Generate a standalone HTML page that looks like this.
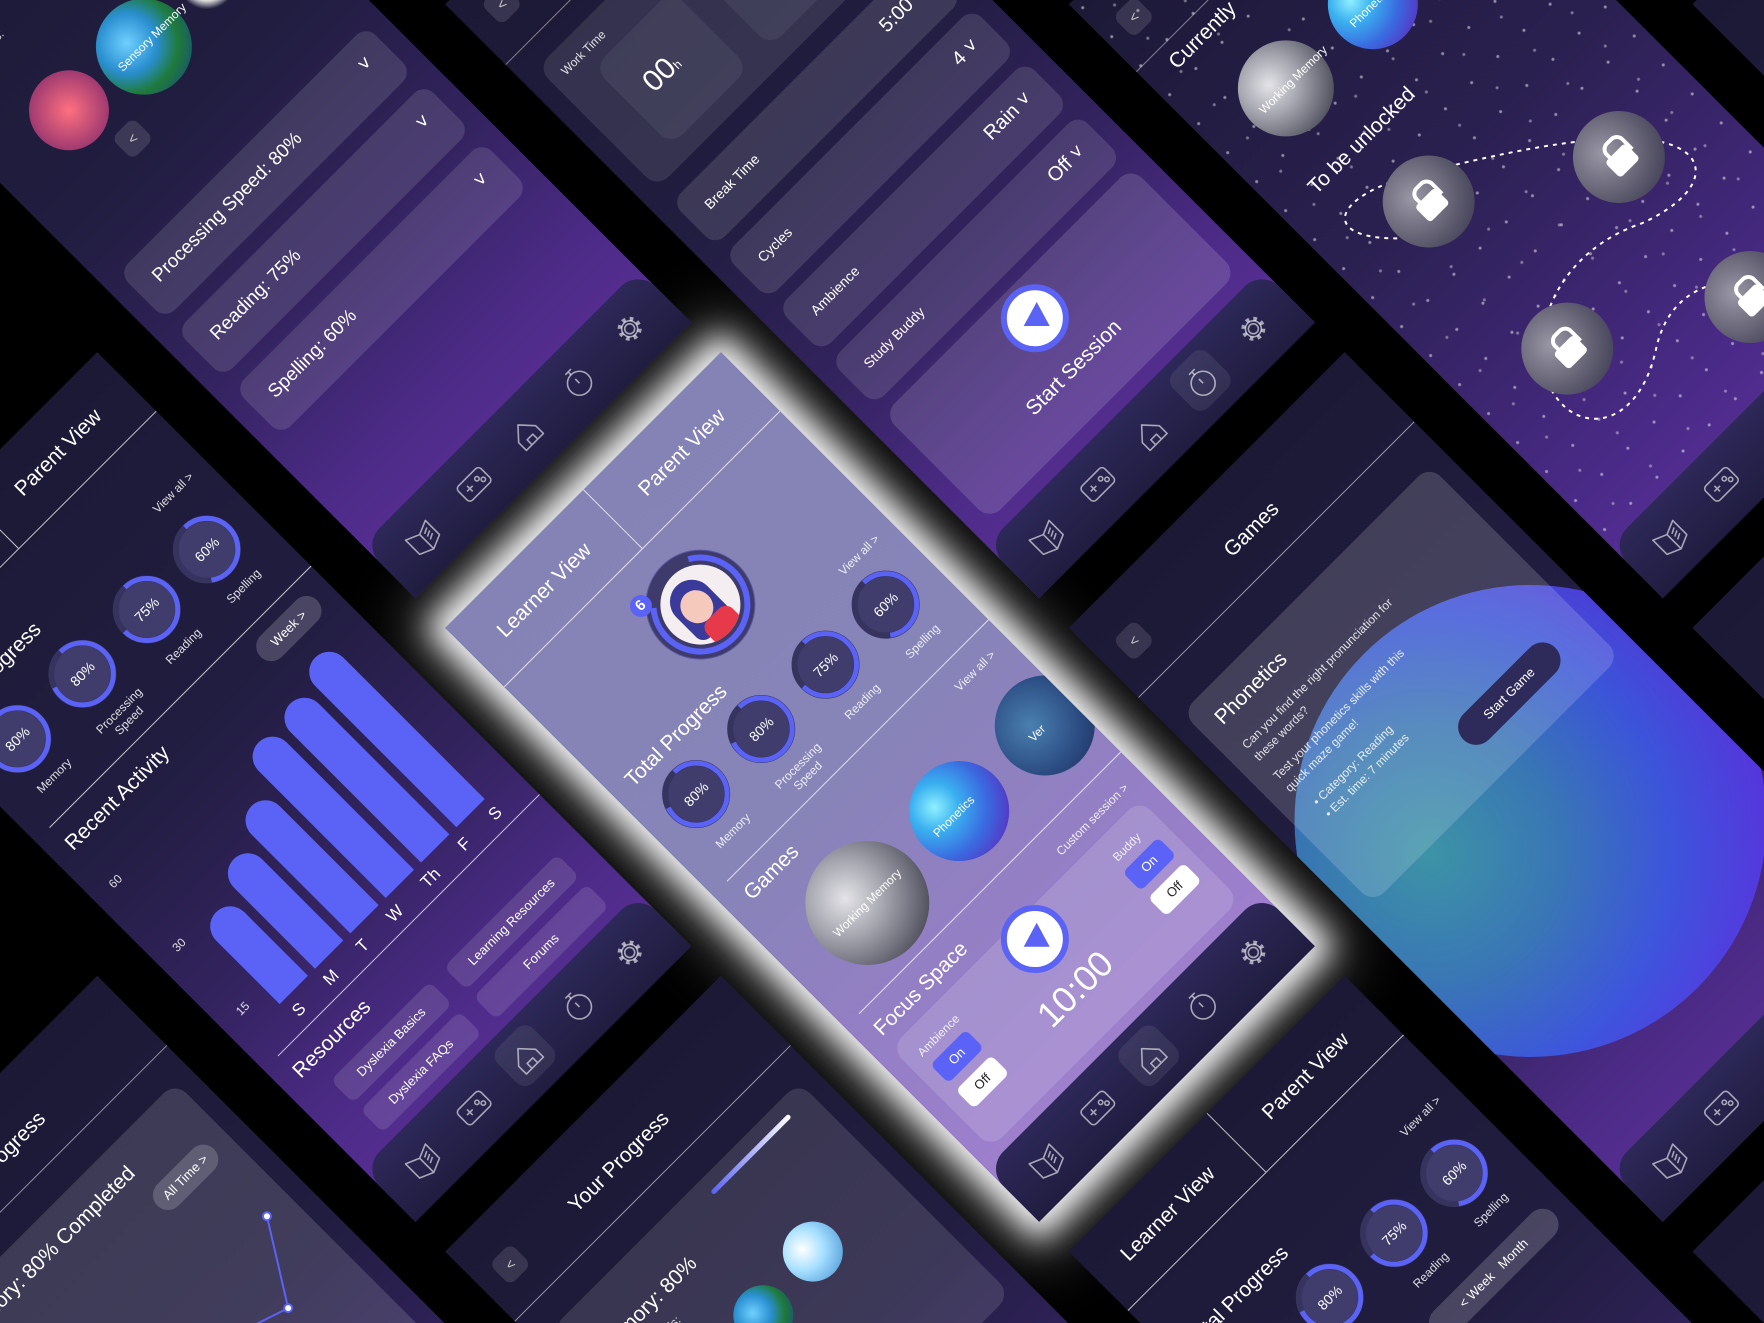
<!DOCTYPE html>
<html><head><meta charset="utf-8">
<style>
*{margin:0;padding:0;box-sizing:border-box}
html,body{width:1764px;height:1323px;overflow:hidden;background:#000}
body{font-family:"Liberation Sans",sans-serif}
#wrap{position:relative;width:1764px;height:1323px;overflow:hidden;background:#000}
.stage{position:absolute;left:880px;top:787px;width:0;height:0;transform:rotate(-45deg);transform-origin:0 0}
.ph{position:absolute;width:390px;height:840px;overflow:hidden;color:#fff;
background:linear-gradient(180deg,#1c1936 0%,#211d40 40%,#33235f 65%,#4d2b88 85%,#5a3098 100%)}
.a{position:absolute;white-space:nowrap}
.nav{position:absolute;left:0;right:0;top:765px;height:90px;border-radius:24px 24px 0 0;background:linear-gradient(180deg,#2d2858,#1d1a3b)}
.nav svg{position:absolute;left:0;top:0}
.ln{position:absolute;background:rgba(255,255,255,.75);height:1px}
.vl{position:absolute;background:rgba(255,255,255,.75);width:1px}
.card{position:absolute;border-radius:16px;background:rgba(255,255,255,.1)}
.t20{font-size:21px}
.t12{font-size:12px;color:rgba(255,255,255,.85)}
.t14{font-size:14px}
.ring{position:absolute;width:74px;height:74px}
.ring span{position:absolute;left:0;top:0;width:74px;height:74px;line-height:74px;text-align:center;font-size:14px}
.lab{position:absolute;width:100px;text-align:center;font-size:12px;color:rgba(255,255,255,.85)}
.planet{position:absolute;border-radius:50%}
.grey{background:radial-gradient(circle at 40% 35%,#e4e4e8,#a6a6b0 35%,#6b6b78 65%,#2e2e3a 95%)}
.blue{background:radial-gradient(circle at 35% 30%,#8ff0ff,#3ab0f0 25%,#3a6ae0 55%,#5a2fc0 85%,#2a1f6a)}
.earth{background:radial-gradient(circle at 40% 35%,#6fd0ff,#2a8fd0 35%,#1f7a3a 60%,#154a80 90%)}
.btnon{position:absolute;background:#5a63f5;border-radius:6px;font-size:13px;text-align:center}
.btnoff{position:absolute;background:#fff;color:#222;border-radius:6px;font-size:13px;text-align:center}
.row{position:absolute;left:20px;right:20px;height:62px;border-radius:14px;background:rgba(255,255,255,.12)}
.row b{position:absolute;left:22px;top:20px;font-weight:normal;font-size:19px}
.row i{position:absolute;right:22px;top:16px;font-style:normal;font-size:20px}
.play{position:absolute;width:68px;height:68px;border-radius:50%;background:#fff;border:6px solid #5a63f5}
.play:after{content:"";position:absolute;left:21px;top:15px;border-left:24px solid #5a63f5;border-top:13px solid transparent;border-bottom:13px solid transparent;transform:rotate(-45deg);transform-origin:40% 50%}
.bar{position:absolute;width:40px;background:#5a63f5;border-radius:20px 20px 0 0}
.pill{position:absolute;border-radius:18px;background:rgba(255,255,255,.18);font-size:13px;text-align:center}
.back{position:absolute;width:30px;height:30px;border-radius:8px;background:rgba(255,255,255,.12);font-size:14px;text-align:center;line-height:30px;color:#ccc}
.lock{position:absolute;width:92px;height:92px;border-radius:50%;background:radial-gradient(circle at 40% 35%,#9a98a6,#5e5c6e 55%,#33304a)}
.lock:before{content:"";position:absolute;left:32px;top:40px;width:28px;height:22px;background:#fff;border-radius:4px}
.lock:after{content:"";position:absolute;left:37px;top:26px;width:18px;height:20px;border:4px solid #fff;border-bottom:none;border-radius:10px 10px 0 0}
</style></head><body>
<svg width="0" height="0" style="position:absolute">
<defs>
<g id="navicons" fill="none" stroke="rgba(255,255,255,.6)" stroke-width="1.6" stroke-linejoin="round">
<g transform="translate(48,36)"><path d="M-14,-9 L0,-3 L14,-9 L14,11 L0,17 L-14,11 Z M0,-3 L0,17 M4,0 L10,-3 M4,4 L10,1 M4,8 L10,5"/></g>
<g transform="translate(122,36)"><rect x="-16" y="-10" width="32" height="20" rx="4"/><path d="M-10,0h8M-6,-4v8"/><circle cx="6" cy="-2" r="2.2"/><circle cx="10" cy="3" r="2.2"/></g>
<g transform="translate(195,36)"><path d="M-12,2 L0,-11 L12,2 L12,13 L-12,13 Z M-4,13 v-7 h8 v7"/></g>
<g transform="translate(268,36)"><circle cx="0" cy="3" r="12"/><path d="M0,-9 v-4 M-4,-13h8 M0,3 v-6"/></g>
<g transform="translate(342,36)"><circle r="5"/><circle r="10" stroke-width="4" stroke-dasharray="3.6 4.2"/><circle r="8"/></g>
</g>
<g id="ringb">
<circle cx="37" cy="37" r="31" fill="#403d6c" stroke="#36335f" stroke-width="6"/>
</g>
</defs>
</svg>
<div id="wrap">
<div class="stage">

<!-- CENTRAL PHONE (0,0) -->
<div class="ph" style="left:-195px;top:-420px;background:linear-gradient(180deg,#8583b6 0%,#8784b8 45%,#937fc4 68%,#a17fd0 100%);box-shadow:0 0 30px 14px rgba(255,255,255,.95),0 0 60px 30px rgba(255,255,255,.35);overflow:visible">
 <div style="position:absolute;inset:0;overflow:hidden">
 <div class="ln" style="left:0;right:0;top:83px"></div>
 <div class="vl" style="left:195px;top:0;height:83px"></div>
 <div class="a t20" style="left:35px;top:32px">Learner View</div>
 <div class="a t20" style="left:235px;top:32px">Parent View</div>
 <div class="a" style="left:143px;top:110px;width:108px;height:108px;border-radius:50%;background:#3e3b6c;box-shadow:0 0 0 1px #5a58a0"></div>
 <svg class="a" style="left:143px;top:110px" width="108" height="108"><circle cx="54" cy="54" r="47" fill="none" stroke="#5a63f5" stroke-width="6" stroke-dasharray="230 300" transform="rotate(-60 54 54)"/></svg>
 <div class="a" style="left:157px;top:124px;width:80px;height:80px;border-radius:50%;background:#f4eef0;overflow:hidden">
  <div style="position:absolute;left:14px;top:10px;width:44px;height:60px;border-radius:22px 22px 10px 10px;background:#3a3a9a"></div>
  <div style="position:absolute;left:20px;top:22px;width:32px;height:34px;border-radius:50%;background:#f6c9bd"></div>
  <div style="position:absolute;left:24px;top:56px;width:36px;height:30px;border-radius:10px;background:#e63a4a"></div>
 </div>
 <div class="a" style="left:143px;top:112px;width:22px;height:22px;border-radius:50%;background:#5a63f5;font-size:15px;text-align:center;line-height:22px;font-weight:bold">6</div>
 <div class="a t20" style="left:20px;top:228px">Total Progress</div>
 <div class="a t12" style="right:20px;top:234px">View all &gt;</div>
 <div class="ring" style="left:23px;top:258px"><svg width="74" height="74"><use href="#ringb"/><circle cx="37" cy="37" r="31" fill="none" stroke="#5a63f5" stroke-width="5" stroke-dasharray="156 200" transform="rotate(-90 37 37)"/></svg><span>80%</span></div>
 <div class="ring" style="left:115px;top:258px"><svg width="74" height="74"><use href="#ringb"/><circle cx="37" cy="37" r="31" fill="none" stroke="#5a63f5" stroke-width="5" stroke-dasharray="156 200" transform="rotate(-90 37 37)"/></svg><span>80%</span></div>
 <div class="ring" style="left:206px;top:258px"><svg width="74" height="74"><use href="#ringb"/><circle cx="37" cy="37" r="31" fill="none" stroke="#5a63f5" stroke-width="5" stroke-dasharray="146 200" transform="rotate(-90 37 37)"/></svg><span>75%</span></div>
 <div class="ring" style="left:291px;top:258px"><svg width="74" height="74"><use href="#ringb"/><circle cx="37" cy="37" r="31" fill="none" stroke="#5a63f5" stroke-width="5" stroke-dasharray="117 200" transform="rotate(-90 37 37)"/></svg><span>60%</span></div>
 <div class="lab" style="left:10px;top:340px">Memory</div>
 <div class="lab" style="left:102px;top:340px">Processing<br>Speed</div>
 <div class="lab" style="left:193px;top:340px">Reading</div>
 <div class="lab" style="left:278px;top:340px">Spelling</div>
 <div class="ln" style="left:20px;right:0;top:378px"></div>
 <div class="a t20" style="left:24px;top:392px">Games</div>
 <div class="a t12" style="right:20px;top:398px">View all &gt;</div>
 <div class="planet grey" style="left:42px;top:431px;width:124px;height:124px"></div>
 <div class="a" style="left:50px;top:486px;font-size:12px;width:108px;text-align:center">Working Memory</div>
 <div class="planet blue" style="left:184px;top:443px;width:100px;height:100px"></div>
 <div class="a" style="left:200px;top:486px;font-size:12px">Phonetics</div>
 <div class="planet" style="left:305px;top:443px;width:100px;height:100px;background:radial-gradient(circle at 40% 40%,#4a80b0,#2a4a80 60%,#1d2a55)"></div>
 <div class="a" style="left:335px;top:486px;font-size:12px">Ver</div>
 <div class="ln" style="left:20px;right:0;top:565px"></div>
 <div class="a t20" style="left:20px;top:580px">Focus Space</div>
 <div class="a t12" style="right:20px;top:586px">Custom session &gt;</div>
 <div class="card" style="left:18px;top:612px;width:352px;height:142px;background:rgba(255,255,255,.14)"></div>
 <div class="play" style="left:163px;top:603px"></div>
 <div class="a" style="left:145px;top:680px;font-size:36px">10:00</div>
 <div class="a t12" style="left:34px;top:630px">Ambience</div>
 <div class="btnon" style="left:34px;top:652px;width:50px;height:26px;line-height:26px">On</div>
 <div class="btnoff" style="left:34px;top:688px;width:50px;height:26px;line-height:26px">Off</div>
 <div class="a t12" style="left:310px;top:630px">Buddy</div>
 <div class="btnon" style="left:306px;top:652px;width:50px;height:26px;line-height:26px">On</div>
 <div class="btnoff" style="left:306px;top:688px;width:50px;height:26px;line-height:26px">Off</div>
 <div class="nav"><div style="position:absolute;left:170px;top:10px;width:50px;height:50px;border-radius:12px;background:rgba(255,255,255,.08)"></div><svg width="390" height="80"><use href="#navicons"/></svg></div>
 </div>
</div>

<!-- START SESSION (441,-441) -->
<div class="ph" style="left:246px;top:-861px">
 <div class="back" style="left:25px;top:25px">&lt;</div>
 <div class="ln" style="left:0;right:0;top:85px;opacity:.6"></div>
 <div class="card" style="left:20px;top:110px;width:350px;height:170px"></div>
 <div class="a t12" style="left:35px;top:125px">Work Time</div>
 <div class="card" style="left:60px;top:150px;width:110px;height:110px;background:rgba(255,255,255,.06)"></div>
 <div class="card" style="left:200px;top:150px;width:110px;height:110px;background:rgba(255,255,255,.06)"></div>
 <div class="a" style="left:85px;top:185px;font-size:30px">00<span style="font-size:12px">h</span></div>
 <div class="a" style="left:225px;top:185px;font-size:30px">10<span style="font-size:12px">m</span></div>
 <div class="row" style="top:300px"><b style="font-size:14px">Break Time</b><i>5:00 ˅</i></div>
 <div class="row" style="top:375px"><b style="font-size:14px">Cycles</b><i>4 ˅</i></div>
 <div class="row" style="top:450px"><b style="font-size:14px">Ambience</b><i>Rain ˅</i></div>
 <div class="row" style="top:525px"><b style="font-size:14px">Study Buddy</b><i>Off ˅</i></div>
 <div class="card" style="left:20px;top:600px;width:350px;height:150px;background:rgba(255,255,255,.14)"></div>
 <div class="play" style="left:161px;top:605px"></div>
 <div class="a t20" style="left:125px;top:690px">Start Session</div>
 <div class="nav"><div style="position:absolute;left:243px;top:10px;width:50px;height:50px;border-radius:12px;background:rgba(255,255,255,.08)"></div><svg width="390" height="80"><use href="#navicons"/></svg></div>
</div>

<!-- PROCESSING (0,-882) -->
<div class="ph" style="left:-195px;top:-1302px">
 <div class="a t12" style="left:30px;top:140px">Memory Skills:</div>
 <div class="planet" style="left:60px;top:210px;width:80px;height:80px;background:radial-gradient(circle,#ff7080,#a03a70 70%,transparent)"></div>
 <div class="planet earth" style="left:150px;top:210px;width:96px;height:96px"></div>
 <div class="a" style="left:165px;top:250px;font-size:12px">Sensory Memory</div>
 <div class="planet" style="left:260px;top:225px;width:60px;height:60px;background:radial-gradient(circle,#fff,#ddd 50%,transparent 70%)"></div>
 <div class="back" style="left:110px;top:300px">&lt;</div>
 <div class="row" style="top:400px;height:66px"><b>Processing Speed: 80%</b><i>˅</i></div>
 <div class="row" style="top:482px;height:66px"><b>Reading: 75%</b><i>˅</i></div>
 <div class="row" style="top:564px;height:66px"><b>Spelling: 60%</b><i>˅</i></div>
 <div class="nav"><svg width="390" height="80"><use href="#navicons"/></svg></div>
</div>

<!-- PARENT / RECENT (-441,-441) -->
<div class="ph" style="left:-636px;top:-861px">
 <div class="ln" style="left:0;right:0;top:83px"></div>
 <div class="vl" style="left:195px;top:0;height:83px"></div>
 <div class="a t20" style="left:35px;top:32px">Learner View</div>
 <div class="a t20" style="left:235px;top:32px">Parent View</div>
 <div class="a t20" style="left:20px;top:140px">Total Progress</div>
 <div class="a t12" style="right:20px;top:146px">View all &gt;</div>
 <div class="ring" style="left:23px;top:180px"><svg width="74" height="74"><use href="#ringb"/><circle cx="37" cy="37" r="31" fill="none" stroke="#5a63f5" stroke-width="5" stroke-dasharray="156 200" transform="rotate(-90 37 37)"/></svg><span>80%</span></div>
 <div class="ring" style="left:115px;top:180px"><svg width="74" height="74"><use href="#ringb"/><circle cx="37" cy="37" r="31" fill="none" stroke="#5a63f5" stroke-width="5" stroke-dasharray="156 200" transform="rotate(-90 37 37)"/></svg><span>80%</span></div>
 <div class="ring" style="left:206px;top:180px"><svg width="74" height="74"><use href="#ringb"/><circle cx="37" cy="37" r="31" fill="none" stroke="#5a63f5" stroke-width="5" stroke-dasharray="146 200" transform="rotate(-90 37 37)"/></svg><span>75%</span></div>
 <div class="ring" style="left:291px;top:180px"><svg width="74" height="74"><use href="#ringb"/><circle cx="37" cy="37" r="31" fill="none" stroke="#5a63f5" stroke-width="5" stroke-dasharray="117 200" transform="rotate(-90 37 37)"/></svg><span>60%</span></div>
 <div class="lab" style="left:10px;top:262px">Memory</div>
 <div class="lab" style="left:102px;top:262px">Processing<br>Speed</div>
 <div class="lab" style="left:193px;top:262px">Reading</div>
 <div class="lab" style="left:278px;top:262px">Spelling</div>
 <div class="ln" style="left:20px;right:0;top:302px"></div>
 <div class="a t20" style="left:20px;top:318px">Recent Activity</div>
 <div class="pill" style="left:290px;top:316px;width:80px;height:30px;line-height:30px">Week &gt;</div>
 <div class="a t12" style="left:22px;top:380px">60</div>
 <div class="a t12" style="left:22px;top:470px">30</div>
 <div class="a t12" style="left:22px;top:560px">15</div>
 <div class="bar" style="left:58px;top:480px;height:110px"></div>
 <div class="bar" style="left:108px;top:455px;height:135px"></div>
 <div class="bar" style="left:158px;top:430px;height:160px"></div>
 <div class="bar" style="left:208px;top:390px;height:200px"></div>
 <div class="bar" style="left:258px;top:385px;height:205px"></div>
 <div class="bar" style="left:308px;top:370px;height:220px"></div>
 <div class="a" style="left:62px;top:598px;font-size:17px;word-spacing:28px">S M T W Th F S</div>
 <div class="ln" style="left:20px;right:0;top:625px"></div>
 <div class="a t20" style="left:20px;top:640px">Resources</div>
 <div class="pill" style="left:40px;top:680px;width:140px;height:32px;line-height:32px;border-radius:8px;background:rgba(255,255,255,.12)">Dyslexia Basics</div>
 <div class="pill" style="left:200px;top:680px;width:160px;height:32px;line-height:32px;border-radius:8px;background:rgba(255,255,255,.12)">Learning Resources</div>
 <div class="pill" style="left:40px;top:722px;width:140px;height:32px;line-height:32px;border-radius:8px;background:rgba(255,255,255,.12)">Dyslexia FAQs</div>
 <div class="pill" style="left:200px;top:722px;width:160px;height:32px;line-height:32px;border-radius:8px;background:rgba(255,255,255,.12)">Forums</div>
 <div class="nav"><div style="position:absolute;left:170px;top:10px;width:50px;height:50px;border-radius:12px;background:rgba(255,255,255,.08)"></div><svg width="390" height="80"><use href="#navicons"/></svg></div>
</div>

<!-- GAMES (441,441) -->
<div class="ph" style="left:246px;top:21px">
 <div class="back" style="left:22px;top:40px">&lt;</div>
 <div class="a t20" style="left:165px;top:48px">Games</div>
 <div class="ln" style="left:0;right:0;top:98px;opacity:.7"></div>
 <div class="planet" style="left:-46px;top:227px;width:472px;height:472px;opacity:.9;background:radial-gradient(circle at 30% 40%,#3fa0b0 0%,#3a7fc0 30%,#3d5ae8 55%,#5a35e8 80%,#4a2ab0 100%)"></div>
 <div class="card" style="left:20px;top:140px;width:350px;height:270px;background:rgba(255,255,255,.16)"></div>
 <div class="a t20" style="left:40px;top:160px">Phonetics</div>
 <div class="a t12" style="left:40px;top:200px;line-height:17px">Can you find the right pronunciation for<br>these words?</div>
 <div class="a t12" style="left:40px;top:244px;line-height:17px">Test your phonetics skills with this<br>quick maze game!</div>
 <div class="a t12" style="left:50px;top:290px;line-height:17px">• Category: Reading<br>• Est. time: 7 minutes</div>
 <div class="pill" style="left:200px;top:340px;width:130px;height:36px;line-height:36px;background:#2e2a5a">Start Game</div>
 <div class="nav"><svg width="390" height="80"><use href="#navicons"/></svg></div>
</div>

<!-- CURRENTLY (882,0) -->
<div class="ph" style="left:687px;top:-420px;background:radial-gradient(circle at 20% 30%,rgba(255,255,255,.5) 0 1px,transparent 2px) 0 0/37px 41px,radial-gradient(circle at 60% 70%,rgba(255,255,255,.4) 0 1px,transparent 2px) 0 0/53px 47px,linear-gradient(180deg,#1c1936 0%,#2a2050 45%,#4a2a88 85%,#5a3098 100%)">
 <div class="back" style="left:22px;top:40px">&lt;</div>
 <div class="ln" style="left:0;right:0;top:95px;opacity:.6"></div>
 <div class="a t20" style="left:30px;top:105px">Currently</div>
 <div class="planet grey" style="left:46px;top:165px;width:96px;height:96px"></div>
 <div class="a" style="left:60px;top:205px;font-size:12px">Working Memory</div>
 <div class="planet blue" style="left:170px;top:170px;width:90px;height:90px"></div>
 <div class="a" style="left:185px;top:208px;font-size:12px">Phonetics</div>
 <div class="a t20" style="left:40px;top:292px">To be unlocked</div>
 <svg class="a" style="left:0;top:330px" width="390" height="420"><path d="M80,80 C10,20 40,-10 115,30 C200,80 260,120 300,160 C360,220 330,260 250,230 C190,200 120,210 80,260 C40,320 90,380 170,330 C230,290 280,330 300,370" fill="none" stroke="#fff" stroke-width="2" stroke-dasharray="4 5"/></svg>
 <div class="lock" style="left:69px;top:348px"></div>
 <div class="lock" style="left:235px;top:451px"></div>
 <div class="lock" style="left:63px;top:550px"></div>
 <div class="lock" style="left:229px;top:643px"></div>
 <div class="nav"><svg width="390" height="80"><use href="#navicons"/></svg></div>
</div>

<!-- 80% COMPLETED (-882,0) -->
<div class="ph" style="left:-1077px;top:-420px">
 <div class="back" style="left:22px;top:40px">&lt;</div>
 <div class="a t20" style="left:120px;top:48px">Your Progress</div>
 <div class="ln" style="left:0;right:0;top:98px;opacity:.7"></div>
 <div class="card" style="left:20px;top:130px;width:350px;height:400px;background:rgba(255,255,255,.14)"></div>
 <div class="a t20" style="left:40px;top:150px">Memory: 80% Completed</div>
 <div class="pill" style="left:270px;top:190px;width:80px;height:30px;line-height:30px">All Time &gt;</div>
 <div class="a t12" style="left:40px;top:240px">Success Rate</div>
 <svg class="a" style="left:40px;top:260px" width="320" height="250"><polyline points="10,230 80,160 130,170 190,90 250,110 300,30" fill="none" stroke="#5a63f5" stroke-width="2"/><g fill="#fff" stroke="#5a63f5" stroke-width="2"><circle cx="80" cy="160" r="4"/><circle cx="130" cy="170" r="4"/><circle cx="190" cy="90" r="4"/><circle cx="250" cy="110" r="4"/><circle cx="300" cy="30" r="4"/></g></svg>
 <div class="nav"><svg width="390" height="80"><use href="#navicons"/></svg></div>
</div>

<!-- YOUR PROGRESS (-441,441) -->
<div class="ph" style="left:-636px;top:21px">
 <div class="back" style="left:22px;top:40px">&lt;</div>
 <div class="a t20" style="left:120px;top:48px">Your Progress</div>
 <div class="ln" style="left:0;right:0;top:98px;opacity:.7"></div>
 <div class="card" style="left:20px;top:130px;width:350px;height:300px;background:rgba(255,255,255,.12)"></div>
 <div class="a" style="left:230px;top:145px;width:110px;height:5px;border-radius:3px;background:linear-gradient(90deg,#5a63f5,#fff)"></div>
 <div class="a t20" style="left:40px;top:170px">Memory: 80%</div>
 <div class="a t12" style="left:40px;top:205px">Memory Skills:</div>
 <div class="planet earth" style="left:150px;top:240px;width:60px;height:60px"></div>
 <div class="planet" style="left:230px;top:230px;width:60px;height:60px;background:radial-gradient(circle at 40% 35%,#fff,#a8e0ff 40%,#3a8ad0)"></div>
 <div class="nav"><svg width="390" height="80"><use href="#navicons"/></svg></div>
</div>

<!-- BOTTOM RIGHT (0,882) -->
<div class="ph" style="left:-195px;top:462px">
 <div class="ln" style="left:0;right:0;top:83px"></div>
 <div class="vl" style="left:195px;top:0;height:83px"></div>
 <div class="a t20" style="left:35px;top:32px">Learner View</div>
 <div class="a t20" style="left:235px;top:32px">Parent View</div>
 <div class="a t20" style="left:20px;top:140px">Total Progress</div>
 <div class="a t12" style="right:20px;top:146px">View all &gt;</div>
 <div class="ring" style="left:23px;top:180px"><svg width="74" height="74"><use href="#ringb"/><circle cx="37" cy="37" r="31" fill="none" stroke="#5a63f5" stroke-width="5" stroke-dasharray="156 200" transform="rotate(-90 37 37)"/></svg><span>80%</span></div>
 <div class="ring" style="left:115px;top:180px"><svg width="74" height="74"><use href="#ringb"/><circle cx="37" cy="37" r="31" fill="none" stroke="#5a63f5" stroke-width="5" stroke-dasharray="156 200" transform="rotate(-90 37 37)"/></svg><span>80%</span></div>
 <div class="ring" style="left:206px;top:180px"><svg width="74" height="74"><use href="#ringb"/><circle cx="37" cy="37" r="31" fill="none" stroke="#5a63f5" stroke-width="5" stroke-dasharray="146 200" transform="rotate(-90 37 37)"/></svg><span>75%</span></div>
 <div class="ring" style="left:291px;top:180px"><svg width="74" height="74"><use href="#ringb"/><circle cx="37" cy="37" r="31" fill="none" stroke="#5a63f5" stroke-width="5" stroke-dasharray="117 200" transform="rotate(-90 37 37)"/></svg><span>60%</span></div>
 <div class="lab" style="left:10px;top:262px">Memory</div>
 <div class="lab" style="left:193px;top:262px">Reading</div>
 <div class="lab" style="left:278px;top:262px">Spelling</div>
 <div class="pill" style="left:200px;top:300px;width:170px;height:32px;line-height:32px">&lt; Week&nbsp;&nbsp; Month</div>
 <div class="nav"><svg width="390" height="80"><use href="#navicons"/></svg></div>
</div>

<!-- right edge phones -->
<div class="ph" style="left:687px;top:462px"><div class="nav"><svg width="390" height="80"><use href="#navicons"/></svg></div></div>
<div class="ph" style="left:246px;top:903px"><div class="nav"><svg width="390" height="80"><use href="#navicons"/></svg></div></div>
<div class="ph" style="left:1128px;top:21px"><div class="nav"><svg width="390" height="80"><use href="#navicons"/></svg></div></div>

</div>
</div>
</body></html>
